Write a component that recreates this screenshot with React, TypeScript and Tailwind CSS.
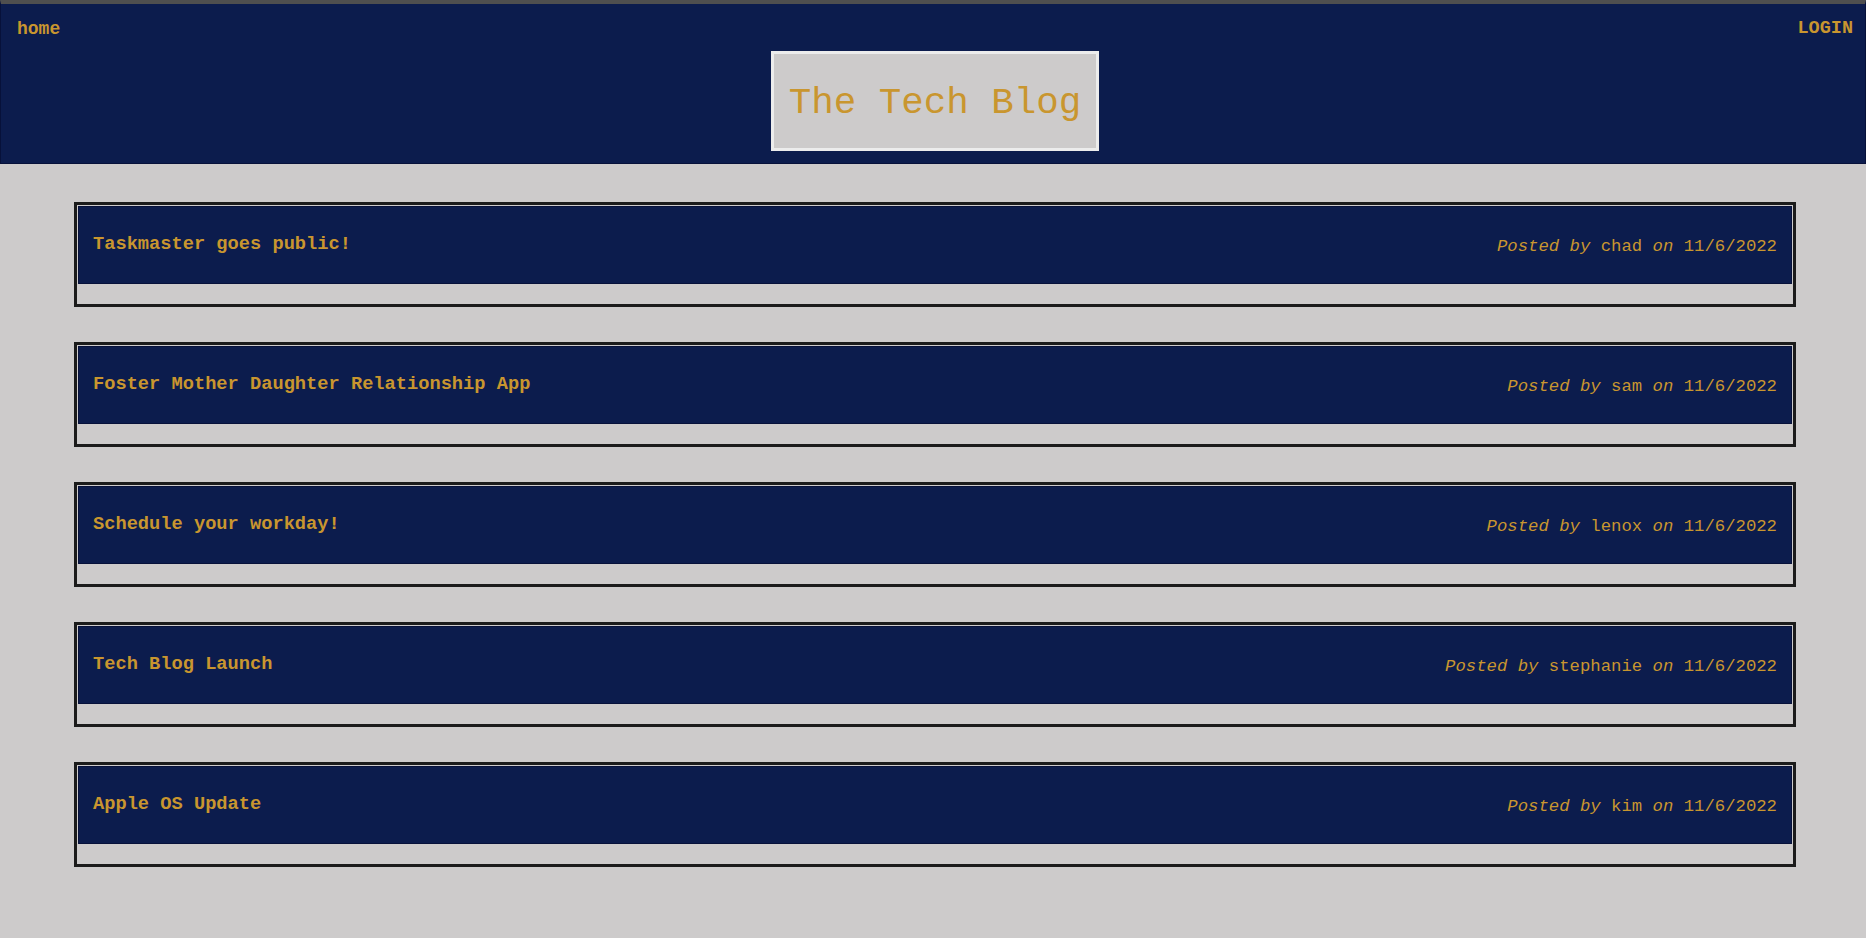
import React from 'react';

interface Post {
  title: string;
  author: string;
  date: string;
}

const posts: Post[] = [
  { title: 'Taskmaster goes public!', author: 'chad', date: '11/6/2022' },
  { title: 'Foster Mother Daughter Relationship App', author: 'sam', date: '11/6/2022' },
  { title: 'Schedule your workday!', author: 'lenox', date: '11/6/2022' },
  { title: 'Tech Blog Launch', author: 'stephanie', date: '11/6/2022' },
  { title: 'Apple OS Update', author: 'kim', date: '11/6/2022' },
];

const mono = { fontFamily: '"Liberation Mono", "Courier New", monospace' };

const PostCard: React.FC<{ post: Post }> = ({ post }) => (
  <div className="border-[3px] border-[#1b1b1b] bg-[#cdcbcb] pt-px px-px">
    <div className="h-[78px] bg-[#0c1c4d] border border-[#07113a] flex items-center justify-between px-[14px]">
      <h2 className="text-[18.7px] font-bold text-[#c9962f] leading-tight">{post.title}</h2>
      <p className="text-[17.3px] text-[#c9962f] mt-[4px] leading-tight">
        <em>Posted by</em> {post.author} <em>on</em> {post.date}
      </p>
    </div>
    <div className="h-[20px]" />
  </div>
);

export default function App() {
  return (
    <div className="min-h-[938px] bg-[#cdcbcb] pb-10" style={mono}>
      {/* Header */}
      <header className="bg-[#0c1c4d] border-t-4 border-t-[#4f4f4f] border-x border-b border-x-[#07113a] border-b-[#07113a] h-[164px]">
        <nav className="flex items-center justify-between pl-[16px] pr-[12px] pt-[14px]">
          <a className="text-[18px] font-bold text-[#c9962f] leading-[22px]">home</a>
          <a className="text-[18.5px] font-bold text-[#c9962f] leading-[22px]">LOGIN</a>
        </nav>
        <div className="flex justify-center mt-[11px] pl-[4px]">
          <div className="border-[3px] border-[#ececec] bg-[#cdcbcb] px-[15px] pt-[28px] pb-[24px]">
            <h1 className="text-[37.5px] leading-[42px] text-[#c9962f] whitespace-nowrap">The Tech Blog</h1>
          </div>
        </div>
      </header>

      {/* Posts */}
      <main className="pl-[74px] pr-[70px] pt-[38px] flex flex-col gap-[35px]">
        {posts.map((post) => (
          <PostCard key={post.title} post={post} />
        ))}
      </main>
    </div>
  );
}
